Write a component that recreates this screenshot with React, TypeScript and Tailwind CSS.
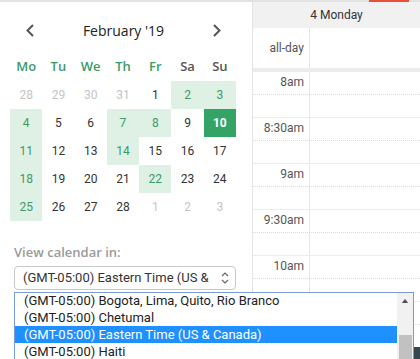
const days = ["Mo", "Tu", "We", "Th", "Fr", "Sa", "Su"];

type Cell = { d: number; muted?: boolean; hl?: boolean; today?: boolean };

const weeks: Cell[][] = [
  [{ d: 28, muted: true }, { d: 29, muted: true }, { d: 30, muted: true }, { d: 31, muted: true }, { d: 1 }, { d: 2, hl: true }, { d: 3, hl: true }],
  [{ d: 4, hl: true }, { d: 5 }, { d: 6 }, { d: 7, hl: true }, { d: 8, hl: true }, { d: 9 }, { d: 10, today: true }],
  [{ d: 11, hl: true }, { d: 12 }, { d: 13 }, { d: 14, hl: true }, { d: 15 }, { d: 16 }, { d: 17 }],
  [{ d: 18, hl: true }, { d: 19 }, { d: 20 }, { d: 21 }, { d: 22, hl: true }, { d: 23 }, { d: 24 }],
  [{ d: 25, hl: true }, { d: 26 }, { d: 27 }, { d: 28 }, { d: 1, muted: true }, { d: 2, muted: true }, { d: 3, muted: true }],
];

const slots = ["8am", "", "8:30am", "", "9am", "", "9:30am", "", "10am", "", "10:30am", ""];

const options = [
  "(GMT-05:00) Bogota, Lima, Quito, Rio Branco",
  "(GMT-05:00) Chetumal",
  "(GMT-05:00) Eastern Time (US & Canada)",
  "(GMT-05:00) Haiti",
];

function cellClass(c: Cell) {
  if (c.today) return "bg-[#34a466] text-white font-bold";
  if (c.hl) return "bg-[#dff0e4] text-[#3b9a68]";
  if (c.muted) return "text-[#c4c4c4]";
  return "text-[#333]";
}

export default function App() {
  return (
    <div className="relative w-[420px] h-[359px] overflow-hidden bg-white font-['Roboto',sans-serif]">
      <div className="h-[2px] bg-[#e2e2e2] relative">
        <div className="absolute left-[369px] w-[40px] h-[2px] bg-[#e8503a]" />
      </div>
      <div className="flex h-[357px]">
        {/* mini calendar */}
        <div className="w-[252px] shrink-0 pt-[14px]">
          <div className="flex items-center justify-between h-[28px] pl-[26px] pr-[31px] font-['Open_Sans',sans-serif] text-[14px] text-[#222]">
            <svg width="8" height="13" viewBox="0 0 8 13" fill="none" stroke="#555" strokeWidth="2">
              <path d="M7 1 L1.5 6.5 L7 12" />
            </svg>
            <span>February '19</span>
            <svg width="8" height="13" viewBox="0 0 8 13" fill="none" stroke="#555" strokeWidth="2">
              <path d="M1 1 L6.5 6.5 L1 12" />
            </svg>
          </div>
          <div className="ml-[10px] mt-[8px] w-[226px] grid grid-cols-7">
            {days.map((d, i) => (
              <div
                key={d}
                className={`h-[29px] flex items-center justify-center font-['Open_Sans',sans-serif] font-semibold text-[13px] ${i < 5 ? "text-[#3b9a68]" : "text-[#555]"}`}
              >
                {d}
              </div>
            ))}
            {weeks.flat().map((c, i) => (
              <div key={i} className={`h-[28px] flex items-center justify-center text-[12px] ${cellClass(c)}`}>
                {c.d}
              </div>
            ))}
          </div>
          <div className="mt-[23px] ml-[14px] font-['Open_Sans',sans-serif] font-semibold text-[13px] text-[#9a9a9a] leading-[16px]">
            View calendar in:
          </div>
          <div className="mt-[6px] ml-[14px] w-[222px] h-[24px] border border-[#c8c8c8] rounded-[4px] flex items-center pl-[8px] pr-[6px] text-[13px] text-[#333]">
            <span className="flex-1 whitespace-nowrap overflow-hidden">(GMT-05:00) Eastern Time (US &amp;</span>
            <svg width="8" height="14" viewBox="0 0 8 14" fill="none" stroke="#666" strokeWidth="1.2">
              <path d="M1 5 L4 2 L7 5" />
              <path d="M1 9 L4 12 L7 9" />
            </svg>
          </div>
        </div>

        {/* day view */}
        <div className="flex-1 border-l border-[#e4e4e4] flex flex-col text-[12px] text-[#555]">
          <div className="h-[26px] bg-[#f1f1f1] flex items-center justify-center text-[#333]">4 Monday</div>
          <div className="h-[40px] flex">
            <div className="w-[57px] border-r border-[#e6e6e6] flex items-center justify-end pr-[5px]">all-day</div>
          </div>
          <div className="h-[4px] bg-[#ececec]" />
          {slots.map((s, i) => (
            <div
              key={i}
              className={`h-[23px] shrink-0 flex border-b ${i % 2 === 0 ? "border-dotted border-[#dadada]" : "border-solid border-[#ececec]"}`}
            >
              <div className="w-[57px] border-r border-[#e6e6e6] text-right pr-[5px] pt-[2px] leading-[16px]">{s}</div>
            </div>
          ))}
        </div>
      </div>

      <div className="absolute left-[414px] top-[347px] w-[6px] h-[12px] bg-[#37474f]" />

      {/* open timezone list */}
      <div className="absolute left-[14px] top-[292px] w-[400px] h-[80px] border border-[#7b9bd3] bg-white flex text-[13px] text-[#222]">
        <div className="flex-1 flex flex-col -mt-[1px]">
          {options.map((o, i) => (
            <div
              key={o}
              className={`h-[17px] shrink-0 flex items-center pl-[9px] whitespace-nowrap ${i === 2 ? "bg-[#1e90ff] text-white" : ""}`}
            >
              {o}
            </div>
          ))}
        </div>
        <div className="w-[16px] bg-[#f1f1f1] flex flex-col items-center">
          <svg className="mt-[6px]" width="8" height="5" viewBox="0 0 8 5">
            <path d="M0 5 L4 0 L8 5 Z" fill="#505050" />
          </svg>
          <div className="mt-[32px] w-[13px] h-[40px] bg-[#c1c1c1]" />
        </div>
      </div>
    </div>
  );
}
